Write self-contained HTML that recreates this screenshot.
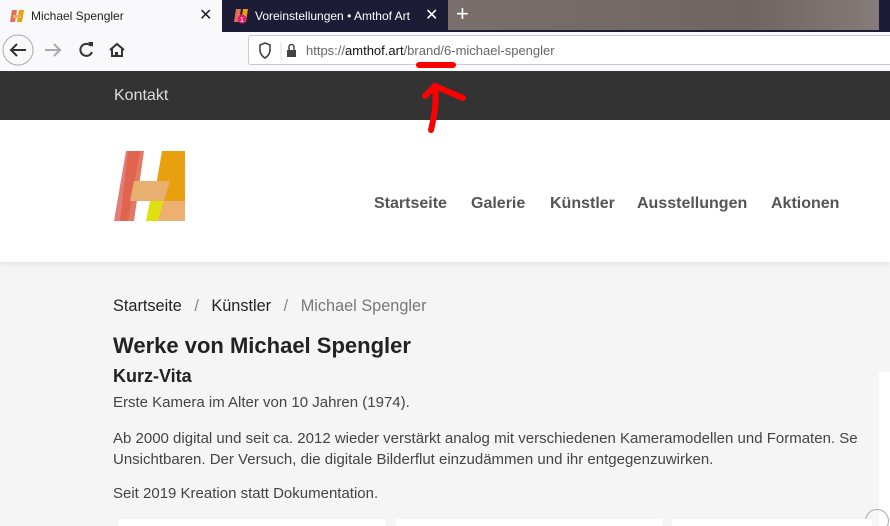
<!DOCTYPE html>
<html><head><meta charset="utf-8"><style>
*{margin:0;padding:0;box-sizing:border-box}
html,body{width:890px;height:526px;overflow:hidden}
body{background:#f5f5f5;font-family:"Liberation Sans",sans-serif;position:relative}
.abs{position:absolute}
.tabbar{left:0;top:0;width:890px;height:32px;background:#1d1c36}
.tab1{left:0;top:0;width:222px;height:32px;background:#f9f9fb;font-size:12px;color:#222}
.tab2{left:222px;top:0;width:226px;height:32px;background:#1d1c36;color:#fff;font-size:12px}
.plus{left:448px;top:0;width:431px;height:30px;background:linear-gradient(90deg,#7b6f6d,#6f6563 70%,#857b79)}
.toolbar{left:0;top:32px;width:890px;height:39px;background:#f9f9fb}
.url{left:248px;top:35px;width:650px;height:30px;background:#fff;border:1px solid #c9c9cf;border-radius:3px;font-size:13px;color:#666}
.nav{left:0;top:71px;width:890px;height:49px;background:#333;color:#ddd;font-size:16px}
.header{left:0;top:120px;width:890px;height:142px;background:#fff;box-shadow:0 2px 6px rgba(0,0,0,.08)}
.menu{top:75px;font-size:16px;color:#555;font-weight:bold}
p{font-size:15px;color:#444}
</style></head><body>
<div class="abs tabbar"></div>
<div class="abs tab1">
 <svg class="abs" style="left:9px;top:8px" width="16" height="16"><polygon points="3,2 8,2 6,14 1,14" fill="#e0705a"/><polygon points="10,2 15,2 13,14 8,14" fill="#e8a010"/><rect x="4" y="7" width="8" height="3" fill="#e8b060"/></svg>
 <span class="abs" style="left:31px;top:9px">Michael Spengler</span>
 <span class="abs" style="left:199px;top:5px;font-size:16px">✕</span>
</div>
<div class="abs tab2">
 <svg class="abs" style="left:11px;top:8px" width="16" height="16"><polygon points="3,1 8,1 6,14 1,14" fill="#e0705a"/><polygon points="10,1 15,1 13,14 8,14" fill="#e8a010"/><circle cx="9" cy="11" r="4.5" fill="#e0206a"/><text x="7" y="14" font-size="7" fill="#fff" font-family="Liberation Sans">1</text></svg>
 <span class="abs" style="left:33px;top:9px">Voreinstellungen • Amthof Art</span>
 <span class="abs" style="left:203px;top:5px;font-size:16px">✕</span>
</div>
<div class="abs plus"><span class="abs" style="left:8px;top:1px;color:#fff;font-size:22px">+</span></div>
<div class="abs toolbar">
 <svg class="abs" style="left:0;top:0" width="140" height="39">
  <circle cx="18" cy="18" r="15" fill="none" stroke="#aaa"/>
  <path d="M26 18H11M17 12l-6 6 6 6" stroke="#333" stroke-width="2" fill="none"/>
  <path d="M60 18H45M54 12l6 6-6 6" stroke="#aaa" stroke-width="2" fill="none"/>
  <path d="M91 14a6 6 0 1 0 1 6" stroke="#333" stroke-width="2" fill="none"/><path d="M88 10h5v5z" fill="#333"/>
  <path d="M110 18l7-6 7 6M112 17v7h10v-7" stroke="#333" stroke-width="2" fill="none"/><rect x="115" y="20" width="3" height="4" fill="#333"/>
 </svg>
</div>
<div class="abs url">
 <svg class="abs" style="left:8px;top:6px" width="40" height="18"><path d="M3 3l5-2 5 2v5c0 4-3 7-5 8-2-1-5-4-5-8z" stroke="#444" stroke-width="1.6" fill="none"/><line x1="24" y1="0" x2="24" y2="18" stroke="#ddd"/><rect x="30" y="8" width="9" height="7" fill="#444"/><path d="M32 8V5a2.5 2.5 0 0 1 5 0v3" stroke="#444" stroke-width="1.5" fill="none"/></svg>
 <span class="abs" style="left:57px;top:7px">https://<span style="color:#111">amthof.art</span>/brand/6-michael-spengler</span>
</div>
<div class="abs nav"><span class="abs" style="left:114px;top:16px">Kontakt</span></div>
<div class="abs header">
 <svg class="abs" style="left:114px;top:31px" width="71" height="70">
  <polygon points="12,0 26,0 14,70 0,70" fill="#e27c78"/>
  <polygon points="14,0 30,0 20,70 6,70" fill="#e06048" opacity=".85"/>
  <polygon points="48,0 71,0 71,70 36,70" fill="#e8a010"/>
  <polygon points="20,30 56,30 50,50 16,50" fill="#e8b070"/>
  <polygon points="36,50 50,50 44,70 32,70" fill="#e0e010"/>
  <polygon points="50,50 71,50 71,70 44,70" fill="#eeb070"/>
 </svg>
 <span class="abs menu" style="left:374px">Startseite</span>
 <span class="abs menu" style="left:471px">Galerie</span>
 <span class="abs menu" style="left:550px">Künstler</span>
 <span class="abs menu" style="left:637px">Ausstellungen</span>
 <span class="abs menu" style="left:771px">Aktionen</span>
</div>
<div class="abs" style="left:113px;top:297px;font-size:16.3px;color:#222">Startseite <span style="color:#888;margin:0 8px">/</span> Künstler <span style="color:#888;margin:0 8px">/</span> <span style="color:#777">Michael Spengler</span></div>
<div class="abs" style="left:113px;top:333px;font-size:22px;font-weight:bold;color:#222">Werke von Michael Spengler</div>
<div class="abs" style="left:113px;top:366px;font-size:18px;font-weight:bold;color:#222">Kurz-Vita</div>
<p class="abs" style="left:113px;top:394px">Erste Kamera im Alter von 10 Jahren (1974).</p>
<p class="abs" style="left:113px;top:428px;line-height:21px;white-space:nowrap">Ab 2000 digital und seit ca. 2012 wieder verstärkt analog mit verschiedenen Kameramodellen und Formaten. Se<br>Unsichtbaren. Der Versuch, die digitale Bilderflut einzudämmen und ihr entgegenzuwirken.</p>
<p class="abs" style="left:113px;top:485px">Seit 2019 Kreation statt Dokumentation.</p>
<div class="abs" style="left:879px;top:372px;width:11px;height:154px;background:#fff"></div>
<div class="abs" style="left:865px;top:509px;width:24px;height:24px;border:1px solid #aaa;border-radius:50%"></div>
<div class="abs" style="left:118px;top:519px;width:268px;height:7px;background:#fff"></div>
<div class="abs" style="left:396px;top:519px;width:266px;height:7px;background:#fff"></div>
<div class="abs" style="left:672px;top:519px;width:200px;height:7px;background:#fff"></div>
<svg class="abs" style="left:405px;top:58px" width="70" height="80"><path d="M14 7H48" stroke="#f00" stroke-width="6" stroke-linecap="round"/><path d="M26 72C29 60 32 45 30 30M20 38L30 28L58 40" stroke="#f00" stroke-width="6" fill="none" stroke-linecap="round"/></svg>
</body></html>
